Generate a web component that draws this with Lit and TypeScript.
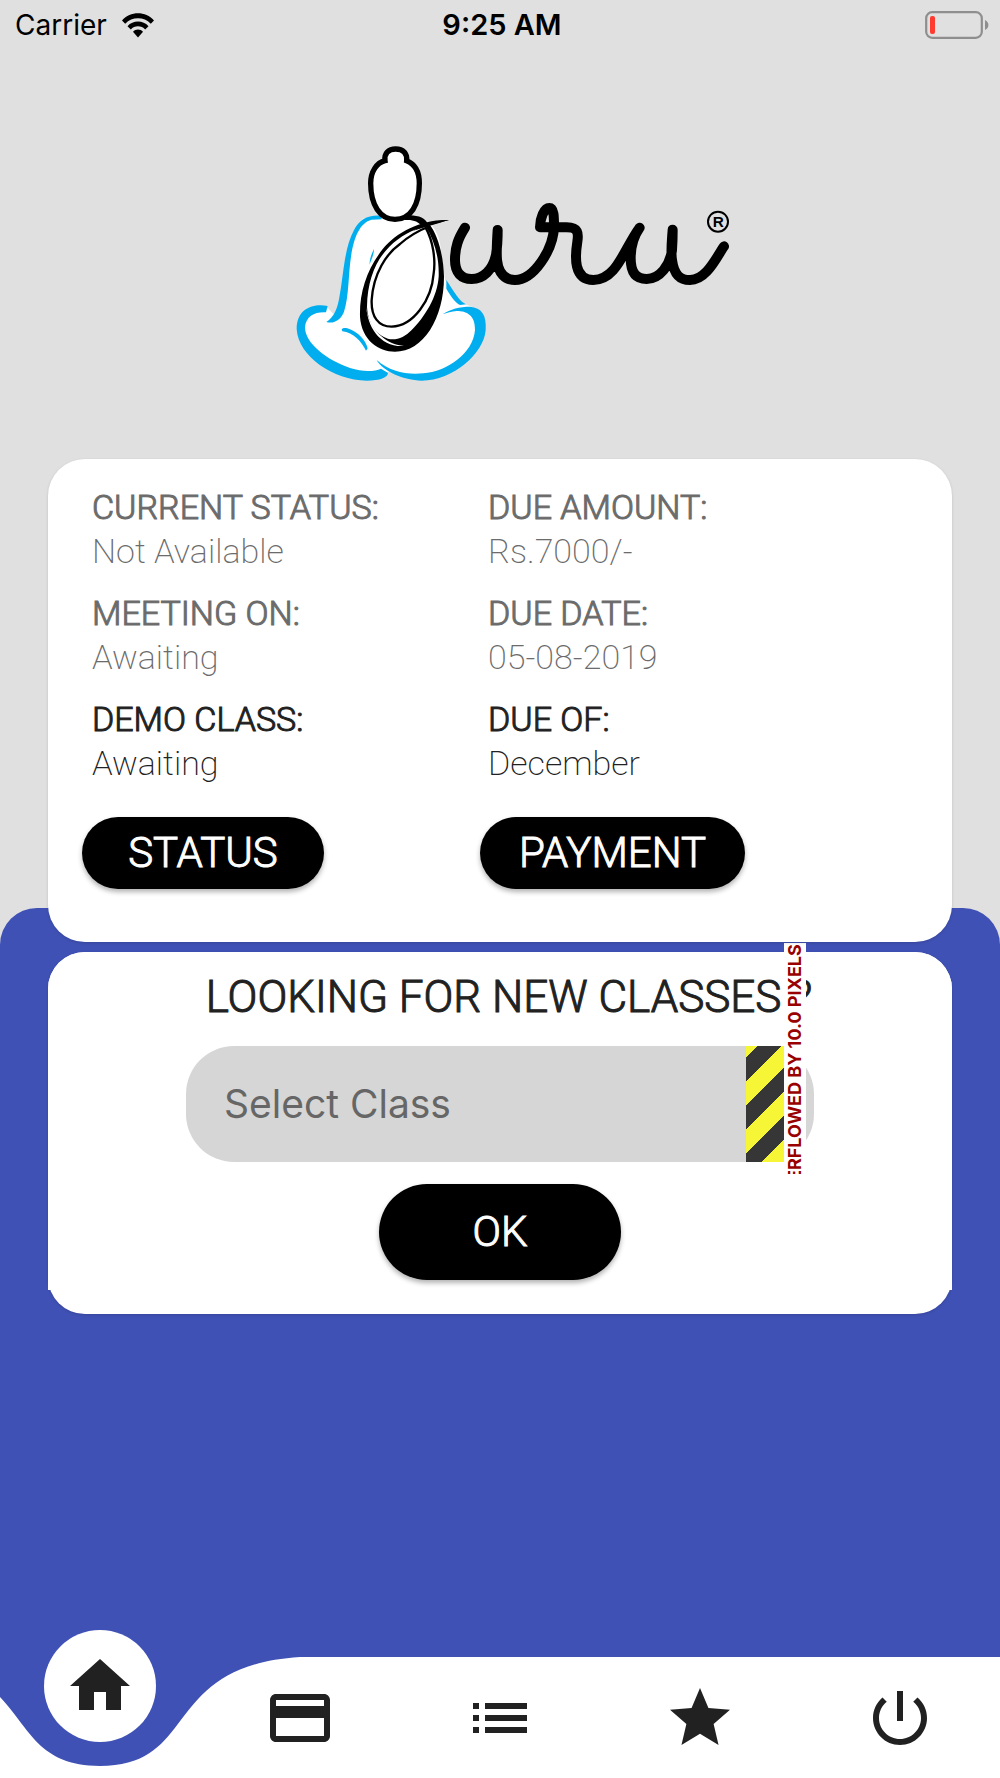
import { LitElement, html, css, svg } from "lit";
import { customElement } from "lit/decorators.js";

const details = [
  { label: "CURRENT STATUS:", value: "Not Available", dim: true },
  { label: "DUE AMOUNT:", value: "Rs.7000/-", dim: true },
  { label: "MEETING ON:", value: "Awaiting", dim: true },
  { label: "DUE DATE:", value: "05-08-2019", dim: true },
  { label: "DEMO CLASS:", value: "Awaiting", dim: false },
  { label: "DUE OF:", value: "December", dim: false },
];

const icons = {
  home: svg`<path d="M10 20v-6h4v6h5v-8h3L12 3 2 12h3v8z"/>`,
  card: svg`<path d="M20 4H4c-1.11 0-1.99.89-1.99 2L2 18c0 1.11.89 2 2 2h16c1.11 0 2-.89 2-2V6c0-1.11-.89-2-2-2zm0 14H4v-6h16v6zm0-10H4V6h16v2z"/>`,
  list: svg`<path d="M3 13h2v-2H3v2zm0 4h2v-2H3v2zm0-8h2V7H3v2zm4 4h14v-2H7v2zm0 4h14v-2H7v2zM7 7v2h14V7H7z"/>`,
  star: svg`<path d="M12 17.27L18.18 21l-1.64-7.03L22 9.24l-7.19-.61L12 2 9.19 8.63 2 9.24l5.46 4.73L5.82 21z"/>`,
  power: svg`<path d="M13 3h-2v10h2V3zm4.83 2.17l-1.42 1.42C17.99 7.86 19 9.81 19 12c0 3.87-3.13 7-7 7s-7-3.13-7-7c0-2.19 1.01-4.14 2.58-5.42L6.17 5.17C4.23 6.82 3 9.26 3 12c0 4.97 4.03 9 9 9s9-4.03 9-9c0-2.74-1.23-5.18-3.17-6.83z"/>`,
};

@customElement("status-bar")
export class StatusBar extends LitElement {
  static styles = css`
    :host {
      display: grid;
      grid-template-columns: 1fr auto 1fr;
      align-items: center;
      height: 50px;
      padding: 0 11px 0 15px;
      font: 400 28px/50px Inter, sans-serif;
      color: #000;
    }
    .left {
      display: flex;
      align-items: center;
      gap: 14px;
    }
    .wifi {
      width: 34px;
      height: 26px;
    }
    .time {
      font-weight: 600;
      font-size: 29px;
    }
    .battery {
      justify-self: end;
      width: 64px;
      height: 28px;
    }
  `;
  render() {
    return html`
      <div class="left">
        <span>Carrier</span>
        <svg class="wifi" viewBox="0 0 34 26" aria-hidden="true">
          <path d="M1 8.500C9.500-1.200 24.500-1.200 33 8.500L29.800 11.800C23 4.500 11 4.500 4.200 11.800Z" />
          <path d="M6.500 14.200C12 8 22 8 27.500 14.200L24.200 17.500C20.500 13.200 13.500 13.200 9.800 17.500Z" />
          <path d="M12 19.800C14.500 16.800 19.500 16.800 22 19.800L17 25.400Z" />
        </svg>
      </div>
      <span class="time">9:25 AM</span>
      <svg class="battery" viewBox="0 0 64 28" aria-hidden="true">
        <rect x="1.200" y="1.200" width="55.600" height="25.600" rx="6" fill="none" stroke="#8e8e8e" stroke-width="2.200" />
        <rect x="5" y="5" width="5" height="18" rx="2" fill="#ff3b30" />
        <path d="M60 9C64.500 11 64.500 17 60 19Z" fill="#8e8e8e" />
      </svg>
    `;
  }
}

@customElement("guru-logo")
export class GuruLogo extends LitElement {
  static styles = css`
    :host {
      display: flex;
      justify-content: center;
    }
    .logo {
      width: 480px;
      height: 250px;
    }
    .blue {
      fill: #00adef;
    }
    .white {
      fill: #fff;
    }
    .head {
      fill: #fff;
      stroke: #000;
      stroke-width: 16;
    }
    .egg {
      fill: none;
      stroke: #000;
      stroke-width: 7;
    }
    .word {
      fill: none;
      stroke: #000;
      stroke-width: 30;
      stroke-linecap: round;
      stroke-linejoin: round;
    }
    .ring {
      fill: none;
      stroke: #000;
      stroke-width: 6;
    }
    .mark {
      font: 700 46px "Liberation Sans", sans-serif;
    }
  `;
  render() {
    return html`
      <svg class="logo" viewBox="-60 30 1440 750" role="img" aria-label="Guru">
        <path class="white" d="M250 265C215 290 207 380 200 450C195 500 180 540 160 552L140 530C90 525 60 560 62 600C75 690 200 745 300 735L325 725C400 750 480 740 540 700C590 660 612 610 608 570C600 545 580 530 560 525C540 520 515 480 495 450L480 340C470 290 440 262 400 262Z" />
        <path class="blue" d="M305 257C262 254 240 268 222 300C192 355 190 440 180 490C174 535 162 562 139 576C163 583 184 567 192 545C207 500 205 430 213 380C222 320 240 278 275 269L305 268Z" />
        <path class="blue" d="M143 528C100 520 50 535 50 597C55 680 160 750 260 752C300 752 324 742 324 729L303 716C285 724 250 727 210 714C140 690 75 640 75 592C78 557 105 545 138 547Z" />
        <path class="blue" d="M488 553C510 537 540 530 570 530C605 533 620 555 617 600C612 670 520 752 425 752C370 750 310 725 290 690C330 725 380 735 430 730C500 725 580 670 585 600C586 555 560 543 530 543C515 544 500 549 488 553Z" />
        <path class="blue" d="M499 450V476C512 498 525 518 540 525L558 523C540 516 522 485 499 450Z" />
        <path class="blue" d="M185 598C190 592 200 594 210 598C235 608 257 630 263 655L258 662C245 635 220 608 187 604Z" />
        <path class="blue" d="M282 357C274 372 268 390 269 404C272 392 282 375 282 357Z" />
        <path d="M372 257C410 252 436 264 443 280L425 288C415 275 400 268 375 270Z" />
        <path class="head" d="M315 92C312 70 325 57 347 57C370 57 382 70 380 92C405 102 418 125 418 160C418 225 392 268 345 268C300 268 272 225 272 160C272 125 290 98 315 92Z" />
        <path d="M507 270C430 266 350 305 310 355C262 415 238 485 240 560C245 630 295 665 345 665C430 665 492 565 492 440C490 370 472 315 450 285Z" />
        <path class="white" d="M259 530C262 590 300 652 372 648C325 644 280 612 262 550Z" />
        <path class="white" d="M438 290C462 330 478 380 476 440C472 500 435 560 395 600C378 618 358 628 338 628C300 626 264 590 261 530C262 450 288 390 328 350C358 320 400 295 438 290Z" />
        <path class="egg" d="M437 293C460 335 467 390 461 430C455 510 400 588 335 590C295 590 273 560 275 510C280 430 320 370 360 342C390 315 425 298 450 288" />
        <path d="M507 270C480 270 455 276 430 284L400 302C440 290 470 281 507 270Z" />
        <g transform="translate(420 150)">
          <path class="word" d="M135 143C115 175 105 200 105 240C105 280 125 297 155 297C190 297 218 270 228 225C232 200 233 170 233 150C231 180 229 215 231 240C235 280 255 300 285 300C340 300 400 210 402 140C402 110 402 84 388 84C372 84 360 115 360 142H440C475 142 476 160 472 185C465 230 460 299 520 300C590 300 610 210 659 143C640 170 632 205 632 235C632 280 650 297 680 297C720 297 750 255 756 210C758 180 758 165 758 149C755 190 752 215 756 240C762 285 780 300 810 300C860 300 890 230 912 199" />
          <circle class="ring" cx="894" cy="125" r="30" />
          <text class="mark" x="878" y="141">R</text>
        </g>
      </svg>
    `;
  }
}

@customElement("bottom-nav")
export class BottomNav extends LitElement {
  static styles = css`
    :host {
      display: block;
      position: relative;
      color: #212121;
    }
    .backdrop {
      position: absolute;
      inset: 0;
      display: flex;
    }
    .notch {
      width: 30%;
      height: 100%;
      fill: #fff;
    }
    .fill {
      flex: 1;
      background: #fff;
    }
    .items {
      position: relative;
      display: grid;
      grid-template-columns: repeat(5, 1fr);
      justify-items: center;
      align-items: center;
      height: 121px;
    }
    .item {
      display: grid;
      place-items: center;
      width: 112px;
      height: 112px;
      border-radius: 50%;
      color: inherit;
    }
    .active {
      background: #fff;
      margin: -32px 0 32px;
    }
    .icon {
      width: 72px;
      height: 72px;
      fill: currentColor;
    }
  `;
  render() {
    const items = [
      ["Home", icons.home],
      ["Payments", icons.card],
      ["List", icons.list],
      ["Favourites", icons.star],
      ["Log out", icons.power],
    ] as const;
    return html`
      <div class="backdrop">
        <svg class="notch" viewBox="0 0 300 121" preserveAspectRatio="none" aria-hidden="true">
          <path d="M-100 0C40 9 0 109 100 109C200 109 160 9 300 0V121H-100Z" />
        </svg>
        <div class="fill"></div>
      </div>
      <nav class="items">
        ${items.map(
          ([name, icon], i) => html`
            <a class="item ${i === 0 ? "active" : ""}" href="#" aria-label=${name}>
              <svg class="icon" viewBox="0 0 24 24" aria-hidden="true">${icon}</svg>
            </a>
          `,
        )}
      </nav>
    `;
  }
}

@customElement("app-root")
export class AppRoot extends LitElement {
  static styles = css`
    :host {
      display: flex;
      flex-direction: column;
      min-height: 100vh;
      background: #e0e0e0;
      font-family: Roboto, sans-serif;
      color: #212121;
    }
    .logo {
      padding: 90px 0 69px;
    }
    .card {
      background: #fff;
      border-radius: 37px;
      box-shadow: 0 1px 3px rgba(0, 0, 0, 0.15);
    }
    .summary {
      position: relative;
      z-index: 1;
      margin: 0 48px;
      padding-bottom: 53px;
    }
    .details {
      display: grid;
      grid-template-columns: 1fr 1fr;
      row-gap: 18px;
      margin: 0;
      padding: 26px 68px 0 44px;
      font-size: 34px;
      line-height: 44px;
      font-weight: 200;
    }
    .dim {
      color: #6b6b6b;
    }
    .label {
      font-weight: 300;
      -webkit-text-stroke: 1px currentColor;
    }
    .value {
      margin: 0;
    }
    .actions {
      display: grid;
      grid-template-columns: 1fr 1fr;
      justify-items: start;
      padding: 32px 74px 0 34px;
    }
    .button {
      border: 0;
      border-radius: 48px;
      background: #000;
      color: #fff;
      box-shadow: 0 3px 5px rgba(0, 0, 0, 0.3);
      font: 300 42px/50px Roboto, sans-serif;
      -webkit-text-stroke: 1px currentColor;
      min-width: 242px;
      height: 72px;
      padding: 0 39px;
    }
    .tall {
      height: 96px;
    }
    .panel {
      flex: 1;
      margin-top: -34px;
      padding: 44px 48px 0;
      border-radius: 37px 37px 0 0;
      background: #3f51b5;
    }
    .classes {
      padding-bottom: 24px;
    }
    .form {
      position: relative;
      display: flex;
      flex-direction: column;
      align-items: center;
      gap: 22px;
      padding: 18px 138px 10px;
      border-radius: 37px 37px 0 0;
      background: #fff;
    }
    .title {
      padding-left: 18px;
      font-size: 44px;
      line-height: 54px;
      font-weight: 300;
      white-space: nowrap;
      -webkit-text-stroke: 1px currentColor;
    }
    .field {
      position: relative;
      width: 100%;
    }
    .select {
      display: block;
      width: 100%;
      height: 116px;
      padding: 0 38px;
      border: 0;
      border-radius: 48px;
      appearance: none;
      background: #d6d6d6;
      color: #666;
      font: 400 39px/48px Inter, sans-serif;
    }
    .hazard {
      position: absolute;
      top: 0;
      bottom: 0;
      right: 30px;
      width: 38px;
      background: repeating-linear-gradient(
        135deg,
        #f6f636 0 8px,
        #363636 8px 25px,
        #f6f636 25px 34px
      );
    }
    .overflow {
      position: absolute;
      right: 8px;
      bottom: -12px;
      display: flex;
      justify-content: flex-end;
      width: 22px;
      height: 231px;
      box-sizing: border-box;
      padding-bottom: 1px;
      overflow: hidden;
      background: #fff;
      color: #900;
      font: 700 18px/22px Inter, sans-serif;
      writing-mode: vertical-rl;
      transform: rotate(180deg);
      white-space: nowrap;
    }
    .nav {
      background: #3f51b5;
    }
  `;

  render() {
    return html`
      <status-bar></status-bar>
      <guru-logo class="logo"></guru-logo>
      <section class="card summary">
        <dl class="details">
          ${details.map(
            (d) => html`
              <div class=${d.dim ? "dim" : ""}>
                <dt class="label">${d.label}</dt>
                <dd class="value">${d.value}</dd>
              </div>
            `,
          )}
        </dl>
        <div class="actions">
          <button class="button">STATUS</button>
          <button class="button">PAYMENT</button>
        </div>
      </section>
      <main class="panel">
        <section class="card classes">
          <div class="form">
            <label class="title" for="class">LOOKING FOR NEW CLASSES ?</label>
            <div class="field">
              <select class="select" id="class">
                <option>Select Class</option>
              </select>
              <div class="hazard"></div>
              <div class="overflow"><span>ERFLOWED BY 10.0 PIXELS</span></div>
            </div>
            <button class="button tall">OK</button>
          </div>
        </section>
      </main>
      <bottom-nav class="nav"></bottom-nav>
    `;
  }
}
